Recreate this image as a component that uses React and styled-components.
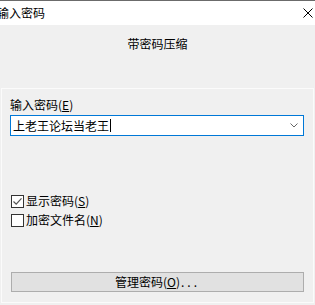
import React, { useState } from "react";
import styled, { createGlobalStyle } from "styled-components";

const GlobalStyle = createGlobalStyle`
    html, body {
        margin: 0;
        padding: 0;
        background: #f0f0f0;
    }
    * {
        box-sizing: border-box;
    }
`;

const Window = styled.div`
    width: 315px;
    height: 305px;
    display: flex;
    flex-direction: column;
    background: #f0f0f0;
    border-top: 1px solid #6b6b6b;
    font-family: "Noto Sans CJK SC", "Microsoft YaHei", sans-serif;
    font-size: 12px;
    color: #000;
    overflow: hidden;
`;

const TitleBar = styled.div`
    height: 24px;
    flex: none;
    display: flex;
    align-items: center;
    justify-content: space-between;
    background: #fff;
    padding-right: 2px;
    .Title {
        &-text {
            margin-left: -3px;
            line-height: 16px;
        }
        &-close {
            width: 10px;
            height: 10px;
            display: block;
        }
    }
`;

const Header = styled.div`
    height: 63px;
    flex: none;
    display: flex;
    justify-content: center;
    padding-top: 11px;
    line-height: 16px;
`;

const Panel = styled.div`
    margin-left: 1px;
    width: 313px;
    height: 215px;
    flex: none;
    display: flex;
    flex-direction: column;
    border: 1px solid #fbfbfb;
    padding: 8px 0 0 8px;
`;

const Label = styled.div`
    line-height: 16px;
`;

const Hot = styled.span`
    text-decoration: underline;
    text-underline-offset: 1px;
`;

const Dots = styled.span`
    letter-spacing: 3px;
    margin-left: 1px;
`;

const Combo = styled.div`
    margin-top: 2px;
    width: 294px;
    height: 21px;
    display: flex;
    align-items: center;
    justify-content: space-between;
    background: #fff;
    border: 1px solid #0078d7;
    padding: 0 5px 0 2px;
    .Combo {
        &-value {
            line-height: 16px;
            display: flex;
            align-items: center;
        }
        &-caret {
            width: 1px;
            height: 13px;
            background: #000;
            margin-left: 1px;
        }
    }
`;

const Checks = styled.div`
    margin-top: 57px;
    display: flex;
    flex-direction: column;
    gap: 3px;
`;

const CheckRow = styled.label`
    display: flex;
    align-items: center;
    gap: 2px;
    line-height: 16px;
    padding-left: 1px;
    cursor: default;
`;

const Box = styled.span`
    width: 13px;
    height: 13px;
    display: flex;
    align-items: center;
    justify-content: center;
    background: #fff;
    border: 1px solid #333;
`;

const Button = styled.button`
    margin-top: auto;
    margin-bottom: 10px;
    margin-left: 1px;
    width: 293px;
    height: 20px;
    background: #e1e1e1;
    border: 1px solid #adadad;
    font-family: inherit;
    font-size: 12px;
    line-height: 16px;
    color: #000;
    padding: 0;
    cursor: default;
`;

const Check = ({ checked, children, onToggle }) => (
    <CheckRow onClick={onToggle}>
        <Box>
            {checked && (
                <svg width="11" height="11" viewBox="0 0 11 11">
                    <path d="M1.5 5.5 L4.2 8.2 L9.5 2.3" fill="none" stroke="#555" strokeWidth="1.2" />
                </svg>
            )}
        </Box>
        <span>{children}</span>
    </CheckRow>
);

export default function App() {
    const [show, setShow] = useState(true);
    const [encName, setEncName] = useState(false);

    return (
        <>
            <GlobalStyle />
            <Window>
                <TitleBar>
                    <span className="Title-text">输入密码</span>
                    <svg className="Title-close" viewBox="0 0 10 10">
                        <path d="M0.5 0.5 L9.5 9.5 M9.5 0.5 L0.5 9.5" stroke="#000" strokeWidth="1" fill="none" />
                    </svg>
                </TitleBar>
                <Header>带密码压缩</Header>
                <Panel>
                    <Label>输入密码(<Hot>E</Hot>)</Label>
                    <Combo>
                        <span className="Combo-value">
                            上老王论坛当老王<span className="Combo-caret" />
                        </span>
                        <svg width="8" height="5" viewBox="0 0 8 5">
                            <path d="M0.5 0.5 L4 4 L7.5 0.5" fill="none" stroke="#666" strokeWidth="1" />
                        </svg>
                    </Combo>
                    <Checks>
                        <Check checked={show} onToggle={() => setShow(!show)}>
                            显示密码(<Hot>S</Hot>)
                        </Check>
                        <Check checked={encName} onToggle={() => setEncName(!encName)}>
                            加密文件名(<Hot>N</Hot>)
                        </Check>
                    </Checks>
                    <Button>管理密码(<Hot>O</Hot>)<Dots>...</Dots></Button>
                </Panel>
            </Window>
        </>
    );
}
